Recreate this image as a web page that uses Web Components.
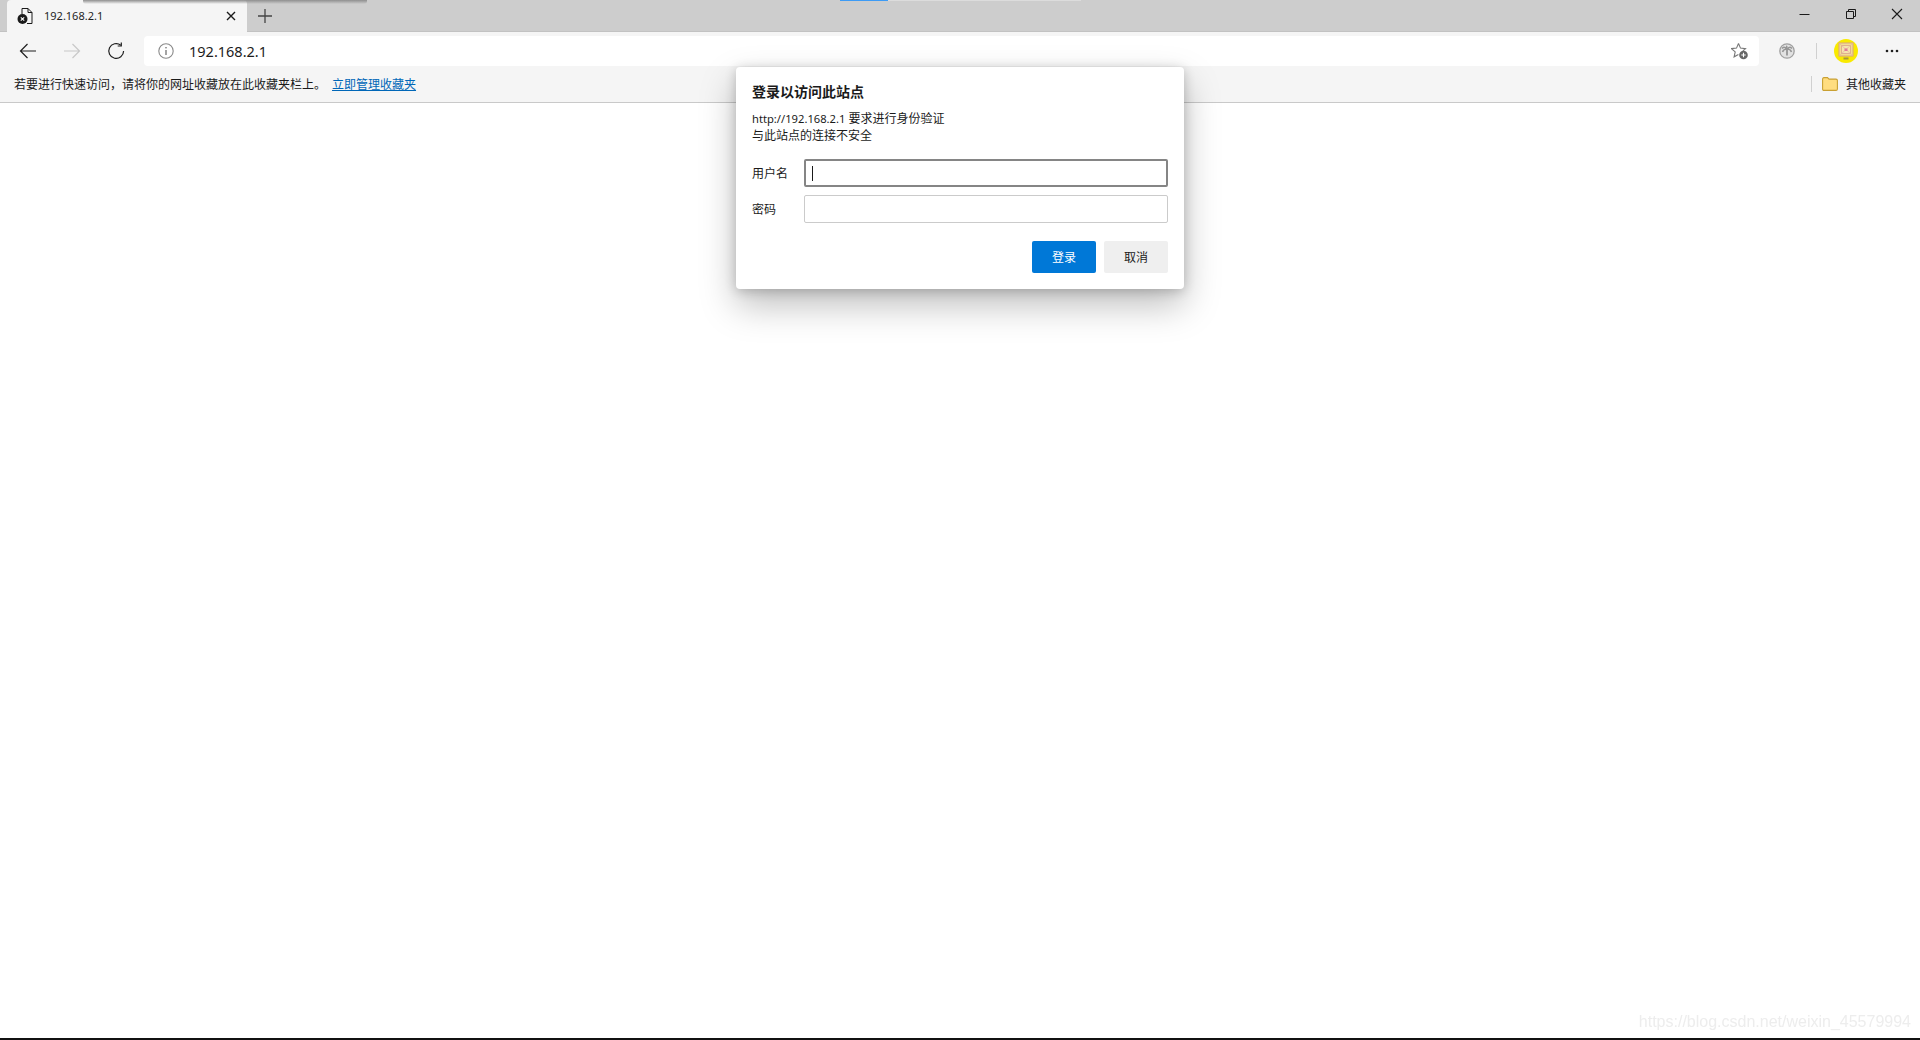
<!DOCTYPE html>
<html lang="zh-CN">
<head>
<meta charset="utf-8">
<title>192.168.2.1</title>
<style>
  html, body { margin: 0; height: 100%; background: #fff; overflow: hidden; }
  body {
    display: flex;
    flex-direction: column;
    height: 1040px;
    font-family: "Noto Sans", "Noto Sans CJK SC", sans-serif;
    color: #1a1a1a;
    position: relative;
  }
  main-page { flex: 1; }
</style>
</head>
<body>
<tab-strip title-text="192.168.2.1"></tab-strip>
<nav-toolbar url="192.168.2.1"></nav-toolbar>
<fav-bar>
  若要进行快速访问，请将你的网址收藏放在此收藏夹栏上。
  <a slot="link">立即管理收藏夹</a>
</fav-bar>
<main-page></main-page>
<auth-dialog></auth-dialog>
<script>
class TabStrip extends HTMLElement {
    constructor() {
        super();
        this.attachShadow({ mode: 'open' });
    }

    connectedCallback() {
        this.shadowRoot.innerHTML = `
            <style>
                :host {
                    display: flex;
                    height: 32px;
                    flex: none;
                    background: #cdcdcd;
                    padding-left: 7px;
                    box-sizing: border-box;
                    position: relative;
                    box-shadow: inset 0 -1px 0 #c2c2c2;
                }
                .tab {
                    width: 240px;
                    height: 32px;
                    background: #f5f5f5;
                    border-radius: 4px 4px 0 0;
                    display: flex;
                    align-items: center;
                    padding: 0 10px;
                    box-sizing: border-box;
                }
                .label { flex: 1; margin-left: 11px; font-size: 11px; margin-top: -1px; color: #1f1f1f; }
                .add { margin-left: 11px; align-self: center; display: flex; }
                svg { display: block; }
                .edge {
                    position: absolute; left: 83px; top: 0; width: 284px; height: 4px;
                    background: linear-gradient(#8f8f8f, rgba(143,143,143,0));
                    border-radius: 0 0 3px 3px;
                }
                .progress {
                    position: absolute; left: 840px; top: 0; width: 241px; height: 1px;
                    background: linear-gradient(90deg, #3d9bf5 48px, #dcdcdc 48px);
                }
                .caption {
                    position: absolute; right: 0; top: 0; height: 28px;
                    display: flex;
                }
                .caption span { width: 46px; height: 28px; display: flex; align-items: center; justify-content: center; }
            </style>
            <div class="tab">
                <svg width="16" height="16" viewBox="0 0 16 16">
                    <path d="M5 .5h6l4 4v11h-5M11 .5v4h4M5 .5V6" fill="none" stroke="#1a1a1a" stroke-width="1"/>
                    <circle cx="5.500" cy="11" r="5" fill="#1a1a1a"/>
                    <path d="M3.800 9.300l3.400 3.400M7.200 9.300l-3.400 3.400" stroke="#fff" stroke-width="1.100"/>
                </svg>
                <span class="label">${this.getAttribute('title-text')}</span>
                <svg width="12" height="12" viewBox="0 0 12 12">
                    <path d="M2 2l8 8M10 2l-8 8" stroke="#1a1a1a" stroke-width="1.400"/>
                </svg>
            </div>
            <div class="add">
                <svg width="14" height="14" viewBox="0 0 14 14">
                    <path d="M7 0v14M0 7h14" stroke="#444" stroke-width="1.300"/>
                </svg>
            </div>
            <div class="edge"></div>
            <div class="progress"></div>
            <div class="caption">
                <span><svg width="12" height="12" viewBox="0 0 12 12"><path d="M0.500 6.500h10" stroke="#1a1a1a"/></svg></span>
                <span><svg width="12" height="12" viewBox="0 0 12 12"><path d="M1.500 3.500h7v7h-7zM3.500 3.500v-2h7v7h-2" fill="none" stroke="#1a1a1a"/></svg></span>
                <span><svg width="12" height="12" viewBox="0 0 12 12"><path d="M1 1l10 10M11 1L1 11" stroke="#1a1a1a" stroke-width="1.100"/></svg></span>
            </div>
        `;
    }
}
customElements.define('tab-strip', TabStrip);

class NavToolbar extends HTMLElement {
    constructor() {
        super();
        this.attachShadow({ mode: 'open' });
    }

    connectedCallback() {
        this.shadowRoot.innerHTML = `
            <style>
                :host {
                    display: flex;
                    align-items: center;
                    height: 38px;
                    flex: none;
                    background: #f5f5f5;
                    padding: 0 0 0 10px;
                    box-sizing: border-box;
                }
                svg { display: block; }
                .btn { width: 36px; height: 30px; margin-right: 8px; display: flex; align-items: center; justify-content: center; flex: none; }
                .omni {
                    flex: 1;
                    height: 30px;
                    background: #fff;
                    border-radius: 4px;
                    display: flex;
                    align-items: center;
                    padding: 0 10px 0 14px;
                    margin-left: 2px;
                }
                .url { flex: 1; margin-left: 15px; font-size: 14.500px; color: #1c1c1c; }
                .right { display: flex; align-items: center; width: 161px; flex: none; }
                .sep { width: 1px; height: 16px; background: #d0d0d0; margin: 0 17px 0 21px; }
            </style>
            <div class="btn"><svg width="18" height="16" viewBox="0 0 18 16"><path d="M17 8H1.500M8.500 1L1.500 8l7 7" fill="none" stroke="#1f1f1f" stroke-width="1.200"/></svg></div>
            <div class="btn"><svg width="18" height="16" viewBox="0 0 18 16"><path d="M1 8h15.500M9.500 1l7 7-7 7" fill="none" stroke="#c8c8c8" stroke-width="1.200"/></svg></div>
            <div class="btn"><svg width="18" height="18" viewBox="0 0 18 18"><path d="M13.800 3.200A7.400 7.400 0 1 0 16.600 9" fill="none" stroke="#1f1f1f" stroke-width="1.200"/><path d="M14.300 .4v3.600h-3.600" fill="none" stroke="#1f1f1f" stroke-width="1.200"/></svg></div>
            <div class="omni">
                <svg width="16" height="16" viewBox="0 0 16 16"><circle cx="8" cy="8" r="7.200" fill="none" stroke="#8a8a8a" stroke-width="1.100"/><path d="M8 7v5" stroke="#666" stroke-width="1.200"/><circle cx="8" cy="4.700" r=".8" fill="#666"/></svg>
                <span class="url">${this.getAttribute('url')}</span>
                <svg width="18" height="18" viewBox="0 0 18 18"><path d="M7.500 1.500l2 4.600 5 .5-2.600 2.300M7.500 1.500L5.500 6.100l-5 .5 3.700 3.300-1.100 4.900 4.300-2.400" fill="none" stroke="#777" stroke-width="1.100"/><circle cx="12.500" cy="13" r="4.300" fill="#666"/><path d="M12.500 10.800v4.400M10.300 13h4.400" stroke="#fff" stroke-width="1.100"/></svg>
            </div>
            <div class="right">
                <svg style="margin-left:20px" width="16" height="16" viewBox="0 0 16 16"><circle cx="8" cy="8" r="7.200" fill="#e2e2e2" stroke="#a0a0a0" stroke-width="1.300"/><path d="M8 6v6.500" stroke="#969696" stroke-width="1.800"/><path d="M8 6Q5.500 3 3 5.500M8 6Q10.500 3 13 5.500M8 6Q4.500 6 3.500 9M8 6q3.500 0 4.500 3M8 6Q7 4 8 2.800" stroke="#969696" stroke-width="1.500" fill="none"/></svg>
                <span class="sep"></span>
                <svg width="24" height="24" viewBox="0 0 24 24">
                    <circle cx="12" cy="12" r="12" fill="#f9ea00"/>
                    <rect x="5" y="4" width="14" height="13" fill="#f2dc95" stroke="#d9a284"/>
                    <rect x="7.500" y="6.500" width="9" height="8" fill="#f5e3b0" stroke="#e0b08f"/>
                    <path d="M5 4l14 13M19 4L5 17" stroke="#e2b49a" stroke-width=".7"/>
                    <rect x="10.500" y="9.500" width="3" height="2.500" fill="#df7a98"/>
                    <rect x="9.500" y="18.500" width="5" height="2" fill="#a5963c"/>
                </svg>
                <svg style="margin-left:27px" width="14" height="4" viewBox="0 0 14 4"><circle cx="2" cy="2" r="1.300" fill="#1f1f1f"/><circle cx="7" cy="2" r="1.300" fill="#1f1f1f"/><circle cx="12" cy="2" r="1.300" fill="#1f1f1f"/></svg>
            </div>
        `;
    }
}
customElements.define('nav-toolbar', NavToolbar);

class FavBar extends HTMLElement {
    constructor() {
        super();
        this.attachShadow({ mode: 'open' });
    }

    connectedCallback() {
        this.shadowRoot.innerHTML = `
            <style>
                :host {
                    display: flex;
                    align-items: center;
                    height: 33px;
                    flex: none;
                    background: #f5f5f5;
                    border-bottom: 1px solid #c9c9c9;
                    box-sizing: border-box;
                    padding: 0 14px 5px 14px;
                    font-size: 12px;
                    color: #1a1a1a;
                }
                .hint { flex: 1; display: flex; align-items: center; }
                ::slotted(a) {
                    color: #0067b8;
                    text-decoration: underline;
                    margin-left: 6px;
                }
                .sep { width: 1px; height: 16px; background: #d0d0d0; margin-right: 10px; }
                .label { margin-left: 8px; }
                svg { display: block; }
            </style>
            <div class="hint"><slot></slot><slot name="link"></slot></div>
            <span class="sep"></span>
            <svg width="16" height="14" viewBox="0 0 16 14"><path d="M.6 2.300Q.6 .6 2 .6h3.500l1.500 1.500h7q1.400 0 1.400 1.400v8.500q0 1.400-1.400 1.400H2q-1.400 0-1.400-1.400z" fill="#ffdd80" stroke="#c9a032" stroke-width="1.100"/></svg>
            <span class="label">其他收藏夹</span>
        `;
    }
}
customElements.define('fav-bar', FavBar);

class MainPage extends HTMLElement {
    constructor() {
        super();
        this.attachShadow({ mode: 'open' });
    }

    connectedCallback() {
        this.shadowRoot.innerHTML = `
            <style>
                :host { display: block; background: #fff; position: relative; border-bottom: 2px solid #111; }
                .mark {
                    position: absolute; right: 9px; bottom: 7px;
                    font: 16px "Liberation Sans", sans-serif;
                    color: #ededed;
                    filter: blur(.4px);
                }
            </style>
            <div class="mark">https://blog.csdn.net/weixin_45579994</div>
        `;
    }
}
customElements.define('main-page', MainPage);

class AuthField extends HTMLElement {
    constructor() {
        super();
        this.attachShadow({ mode: 'open' });
    }

    connectedCallback() {
        const focused = this.hasAttribute('focused');
        this.shadowRoot.innerHTML = `
            <style>
                :host { display: flex; align-items: center; height: 28px; font-size: 12px; }
                .name { width: 52px; flex: none; }
                .box {
                    flex: 1; height: 28px; box-sizing: border-box; background: #fff;
                    border: ${focused ? '2px solid #858585' : '1px solid #cbcbcb'};
                    border-radius: 2px;
                    display: flex; align-items: center; padding-left: 6px;
                }
                .caret { width: 1px; height: 15px; background: #1a1a1a; }
            </style>
            <span class="name">${this.getAttribute('label')}</span>
            <div class="box">${focused ? '<i class="caret"></i>' : ''}</div>
        `;
    }
}
customElements.define('auth-field', AuthField);

class AuthDialog extends HTMLElement {
    constructor() {
        super();
        this.attachShadow({ mode: 'open' });
    }

    connectedCallback() {
        this.shadowRoot.innerHTML = `
            <style>
                :host {
                    position: absolute;
                    left: 736px;
                    top: 67px;
                    width: 448px;
                    height: 222px;
                    box-sizing: border-box;
                    background: #fff;
                    border-radius: 4px;
                    box-shadow: 0 16px 36px rgba(0,0,0,.26), 0 2px 12px rgba(0,0,0,.2);
                    padding: 15px 16px 16px;
                    display: flex;
                    flex-direction: column;
                    font-size: 12px;
                    color: #1a1a1a;
                }
                h1 { margin: 0; font-size: 14px; line-height: 20px; font-weight: 600; }
                p { margin: 8px 0 0; line-height: 17px; height: 36px; }
                .latin { font-size: 11.200px; }
                .fields { display: flex; flex-direction: column; gap: 8px; margin-top: 13px; }
                .actions { display: flex; justify-content: flex-end; gap: 8px; margin-top: 18px; }
                button {
                    width: 64px; height: 32px; border: 0; border-radius: 2px; padding: 0 0 1px;
                    font: inherit; background: #efefef; color: #1a1a1a;
                }
                button.primary { background: #0078d7; color: #fff; }
            </style>
            <h1>登录以访问此站点</h1>
            <p><span class="latin">http://192.168.2.1</span> 要求进行身份验证<br>与此站点的连接不安全</p>
            <div class="fields">
                <auth-field label="用户名" focused></auth-field>
                <auth-field label="密码"></auth-field>
            </div>
            <div class="actions">
                <button class="primary">登录</button>
                <button>取消</button>
            </div>
        `;
    }
}
customElements.define('auth-dialog', AuthDialog);
</script>
</body>
</html>
